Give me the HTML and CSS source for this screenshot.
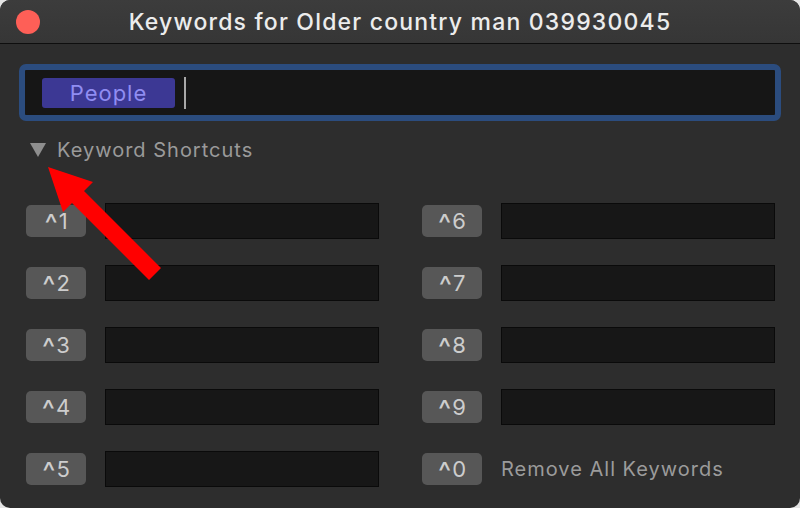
FILE: index.html
```html
<!DOCTYPE html>
<html lang="en">
<head>
    <meta charset="UTF-8">
    <meta name="viewport" content="width=device-width, initial-scale=1.0">
    <title>Keywords</title>
    <link rel="stylesheet" href="styles.css">
</head>
<body>
    <div class="window">
        <div class="titlebar">
            <span class="close-btn"></span>
            <span class="title">Keywords for Older country man 039930045</span>
        </div>

        <div class="content">
            <div class="token-field">
                <span class="token">People</span>
                <span class="caret"></span>
            </div>

            <div class="disclosure">
                <span class="triangle"></span>
                <span class="disclosure-label">Keyword Shortcuts</span>
            </div>

            <div class="shortcuts">
                <div class="shortcut"><span class="key"><span class="ctrl">^</span>1</span><span class="field"></span></div>
                <div class="shortcut"><span class="key"><span class="ctrl">^</span>6</span><span class="field"></span></div>
                <div class="shortcut"><span class="key"><span class="ctrl">^</span>2</span><span class="field"></span></div>
                <div class="shortcut"><span class="key"><span class="ctrl">^</span>7</span><span class="field"></span></div>
                <div class="shortcut"><span class="key"><span class="ctrl">^</span>3</span><span class="field"></span></div>
                <div class="shortcut"><span class="key"><span class="ctrl">^</span>8</span><span class="field"></span></div>
                <div class="shortcut"><span class="key"><span class="ctrl">^</span>4</span><span class="field"></span></div>
                <div class="shortcut"><span class="key"><span class="ctrl">^</span>9</span><span class="field"></span></div>
                <div class="shortcut"><span class="key"><span class="ctrl">^</span>5</span><span class="field"></span></div>
                <div class="shortcut"><span class="key"><span class="ctrl">^</span>0</span><span class="remove-label">Remove All Keywords</span></div>
            </div>
        </div>

        <!-- annotation arrow pointing at the disclosure triangle -->
        <svg class="annotation" width="800" height="508" viewBox="0 0 800 508">
            <polygon points="161,268 84,191 93,182 48,167 63,212 72,203 149,280" fill="#ff0000"/>
        </svg>
    </div>
</body>
</html>
```

FILE: styles.css
```css
html {
    background-color: #e4e4e4;
}
body {
    margin: 0;
    font-family: Inter, "Liberation Sans", sans-serif;
}
.window {
    position: relative;
    width: 800px;
    height: 508px;
    background-color: #2d2d2d;
    border-radius: 10px;
    overflow: hidden;
}
.titlebar {
    height: 43px;
    background: linear-gradient(#3c3c3c, #363636);
    border-bottom: 1px solid #0e0e0e;
    display: flex;
    align-items: center;
    justify-content: center;
    position: relative;
}
.close-btn {
    position: absolute; /* traffic light sits over the bar */
    left: 16px;
    top: 10px;
    width: 24px;
    height: 24px;
    border-radius: 50%;
    background-color: #fe5f57;
}
.title {
    color: #ececec;
    font-size: 23px;
    font-weight: 500;
    letter-spacing: 1.2px;
}
.content {
    padding: 20px 19px 0 19px;
}
.token-field {
    height: 57px;
    box-sizing: border-box;
    border: 6px solid #2b4c7e;
    border-radius: 7px;
    background-color: #161616;
    display: flex;
    align-items: center;
    padding-left: 17px;
}
.token {
    width: 133px;
    height: 30px;
    border-radius: 3px;
    background-color: #3c3894;
    color: #908df2;
    font-size: 22px;
    letter-spacing: 1px;
    display: flex;
    align-items: center;
    justify-content: center;
}
.caret {
    width: 2px;
    height: 32px;
    margin-left: 9px;
    background-color: #a8a8a8;
}
.disclosure {
    height: 20px;
    margin-top: 19px;
    display: flex;
    align-items: center;
    padding-left: 11px;
}
.triangle {
    width: 0;
    height: 0;
    border-left: 8px solid transparent;
    border-right: 8px solid transparent;
    border-top: 14px solid #8e8e8e;
}
.disclosure-label {
    margin-left: 11px;
    color: #9a9a9a;
    font-size: 20px;
    letter-spacing: 1px;
}
.shortcuts {
    margin-top: 43px;
    padding: 0 6px 0 7px;
    display: grid;
    grid-template-columns: 353px 353px;
    column-gap: 43px;
    row-gap: 26px;
}
.shortcut {
    height: 36px;
    display: flex;
    align-items: center;
}
.key {
    width: 60px;
    height: 32px;
    border-radius: 5px;
    background-color: #575757;
    color: #cdcdcd;
    font-size: 22px;
    display: flex;
    align-items: center;
    justify-content: center;
    margin-right: 19px;
}
.ctrl {
    font-size: 28px;
    line-height: 1;
    margin-right: 1px;
    position: relative;
    top: 3px;
}
.field {
    width: 274px;
    height: 36px;
    box-sizing: border-box;
    background-color: #171717;
    border: 1px solid #0a0a0a;
}
.remove-label {
    color: #9b9b9b;
    font-size: 20px;
    letter-spacing: 1px;
}
.annotation {
    position: absolute; /* overlay drawn on top of the dialog */
    left: 0;
    top: 0;
    pointer-events: none;
}
```
